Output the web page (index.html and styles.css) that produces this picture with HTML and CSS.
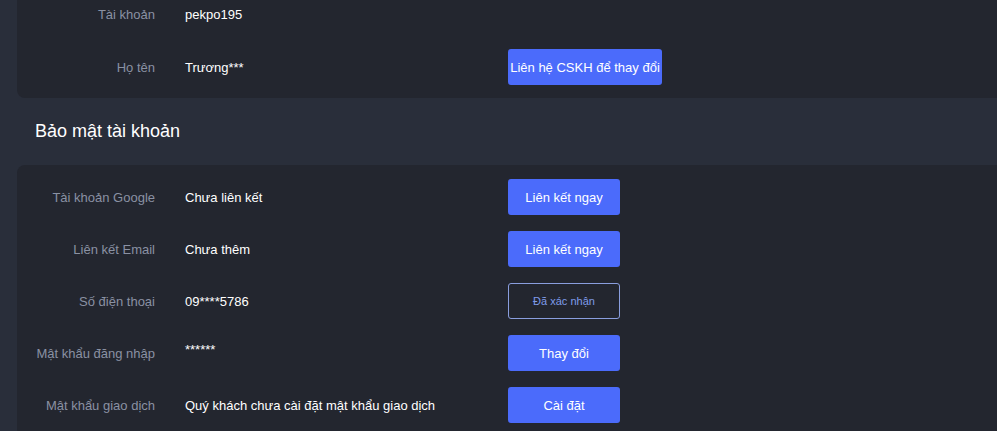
FILE: index.html
```html
<!DOCTYPE html>
<html lang="vi">
<head>
<meta charset="utf-8">
<link rel="stylesheet" href="styles.css">
</head>
<body>
<div class="page">
  <div class="card card-top">
    <div class="row">
      <div class="label">Tài khoản</div>
      <div class="value">pekpo195</div>
    </div>
    <div class="row">
      <div class="label">Họ tên</div>
      <div class="value">Trương***</div>
      <button class="btn btn-wide">Liên hệ CSKH để thay đổi</button>
    </div>
  </div>
  <h2 class="section-title">Bảo mật tài khoản</h2>
  <div class="card card-security">
    <div class="row">
      <div class="label">Tài khoản Google</div>
      <div class="value">Chưa liên kết</div>
      <button class="btn">Liên kết ngay</button>
    </div>
    <div class="row">
      <div class="label">Liên kết Email</div>
      <div class="value">Chưa thêm</div>
      <button class="btn">Liên kết ngay</button>
    </div>
    <div class="row">
      <div class="label">Số điện thoại</div>
      <div class="value">09****5786</div>
      <button class="btn btn-outline">Đã xác nhận</button>
    </div>
    <div class="row">
      <div class="label">Mật khẩu đăng nhập</div>
      <div class="value value-stars">******</div>
      <button class="btn">Thay đổi</button>
    </div>
    <div class="row">
      <div class="label">Mật khẩu giao dịch</div>
      <div class="value">Quý khách chưa cài đặt mật khẩu giao dịch</div>
      <button class="btn">Cài đặt</button>
    </div>
  </div>
</div>
</body>
</html>
```
FILE: styles.css
```css
html, body {
  margin: 0;
  padding: 0;
  background: #292e3a;
  font-family: "Liberation Sans", Arial, sans-serif;
  overflow: hidden;
}
.page {
  padding-left: 17px;
}
.card {
  background: #23262f;
  border-radius: 8px 0 0 8px;
  display: flex;
  flex-direction: column;
  gap: 16px;
}
.card-top {
  margin-top: -18px;
  padding: 14px 0 13px;
  gap: 17px;
}
.card-security {
  padding: 14px 0 14px;
}
.row {
  display: flex;
  align-items: center;
  height: 36px;
}
.label {
  width: 138px;
  text-align: right;
  color: #8a91a3;
  font-size: 13px;
  flex-shrink: 0;
}
.value {
  width: 323px;
  margin-left: 30px;
  color: #ffffff;
  font-size: 13px;
  flex-shrink: 0;
}
.value-stars {
  position: relative;
  top: -4px;
}
.section-title {
  margin: 0;
  height: 67px;
  display: flex;
  align-items: center;
  padding-left: 18px;
  color: #ffffff;
  font-size: 18px;
  font-weight: normal;
}
.btn {
  width: 112px;
  height: 36px;
  border: none;
  border-radius: 3px;
  background: #4b6bfb;
  color: #ffffff;
  font-family: "Liberation Sans", Arial, sans-serif;
  font-size: 13px;
  padding: 0;
  cursor: pointer;
  flex-shrink: 0;
}
.btn-wide {
  width: 154px;
}
.btn-outline {
  background: transparent;
  border: 1px solid #8a9ede;
  color: #7f9be9;
  font-size: 11px;
}
```
